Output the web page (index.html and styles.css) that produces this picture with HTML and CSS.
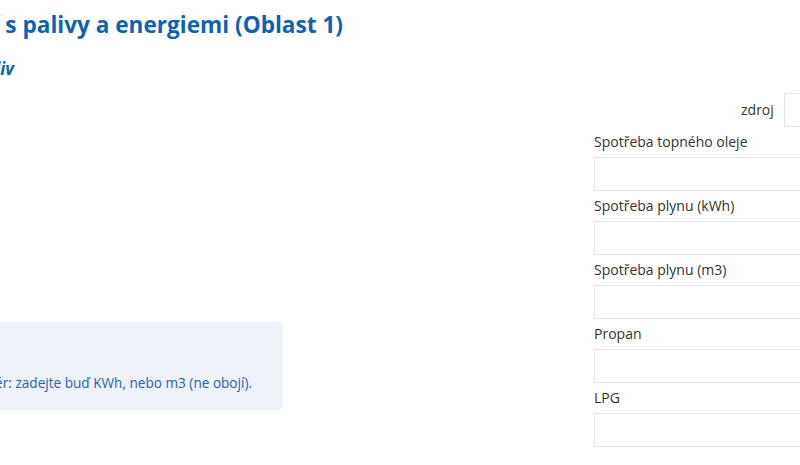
FILE: index.html
```html
<!DOCTYPE html>
<html lang="cs">
<head>
<meta charset="utf-8">
<title>Spotřeba paliv</title>
<link rel="stylesheet" href="styles.css">
</head>
<body>
<div class="page">
  <header class="head">
    <h1 class="title"><span>Hospodaření s palivy a energiemi (Oblast 1)</span></h1>
    <h2 class="subtitle"><span>Spotřeba paliv</span></h2>
  </header>
  <div class="cols">
    <div class="left">
      <div class="note">
        <p class="note-text"><span>Plynoměr: zadejte buď KWh, nebo m3 (ne obojí).</span></p>
      </div>
    </div>
    <form class="right">
      <div class="source">
        <label class="source-label">zdroj</label>
        <input class="source-input" type="text">
      </div>
      <label class="field-label">Spotřeba topného oleje</label>
      <input class="field" type="text">
      <label class="field-label">Spotřeba plynu (kWh)</label>
      <input class="field" type="text">
      <label class="field-label">Spotřeba plynu (m3)</label>
      <input class="field" type="text">
      <label class="field-label">Propan</label>
      <input class="field" type="text">
      <label class="field-label">LPG</label>
      <input class="field" type="text">
    </form>
  </div>
</div>
</body>
</html>
```
FILE: styles.css
```css
html, body {
  margin: 0;
  padding: 0;
  background: #fff;
  overflow: hidden;
  width: 800px;
  height: 465px;
}
.page {
  font-family: "Open Sans", "Noto Sans", sans-serif;
  color: #333;
}
.head {
  padding-top: 8px;
}
.title {
  margin: 0;
  width: 343px;
  display: flex;
  justify-content: flex-end;
  white-space: nowrap;
  font-size: 22.6px;
  line-height: 34px;
  font-weight: 700;
  color: #0f62b0;
}
.subtitle {
  margin: 16px 0 0;
  width: 14px;
  display: flex;
  justify-content: flex-end;
  white-space: nowrap;
  font-size: 17px;
  line-height: 22px;
  font-weight: 700;
  font-style: italic;
  color: #0f62b0;
}
.cols {
  display: flex;
}
.left {
  width: 283px;
  flex: none;
  padding-top: 242px;
}
.note {
  height: 88px;
  background: #edf1f8;
  border-radius: 0 5px 5px 0;
  box-sizing: border-box;
  padding-top: 51px;
}
.note-text {
  margin: 0;
  width: 252px;
  display: flex;
  justify-content: flex-end;
  white-space: nowrap;
  font-size: 13.6px;
  line-height: 20px;
  color: #2e62ad;
}
.right {
  margin-left: 311px;
  width: 300px;
  flex: none;
  display: flex;
  flex-direction: column;
  padding-top: 13px;
}
.source {
  display: flex;
  justify-content: flex-start;
  align-items: center;
  gap: 10px;
  padding-left: 147px;
}
.source-label {
  font-size: 14px;
  line-height: 20px;
}
.source-input {
  width: 120px;
  height: 34px;
  box-sizing: border-box;
  border: 1px solid #e5e5e5;
  margin: 0;
}
.field-label {
  font-size: 14px;
  line-height: 20px;
  margin: 5px 0 5px;
  color: #333;
}
.field {
  height: 34px;
  box-sizing: border-box;
  border: 1px solid #e5e5e5;
  margin: 0;
  width: 300px;
}
```
